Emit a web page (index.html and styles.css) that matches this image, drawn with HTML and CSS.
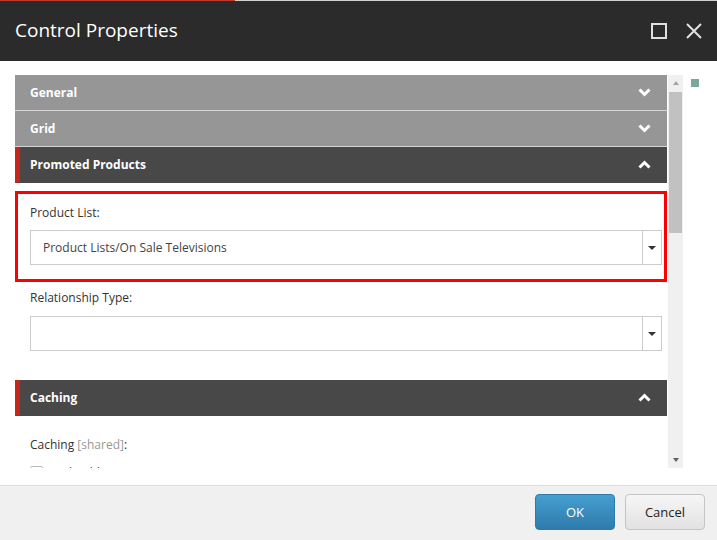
FILE: index.html
```html
<!DOCTYPE html>
<html lang="en">
<head>
    <meta charset="UTF-8">
    <title>Control Properties</title>
    <link rel="stylesheet" href="styles.css">
</head>
<body>
    <div class="dialog">
        <header class="dialog-head">
            <div class="progress"></div>
            <div class="title-row">
                <h1>Control Properties</h1>
                <div class="head-icons">
                    <span class="maximize"></span>
                    <svg class="close" width="16" height="16" viewBox="0 0 16 16">
                        <path d="M1 1 L15 15 M15 1 L1 15" stroke="#e0e0e0" stroke-width="2" fill="none"/>
                    </svg>
                </div>
            </div>
        </header>

        <div class="dialog-body">
            <div class="panel">
                <div class="acc-head">
                    <span>General</span>
                    <svg class="chev" width="13" height="9" viewBox="0 0 13 9"><path d="M1.5 1.5 L6.5 6.5 L11.5 1.5" stroke="#fff" stroke-width="3" fill="none"/></svg>
                </div>
                <div class="acc-head">
                    <span>Grid</span>
                    <svg class="chev" width="13" height="9" viewBox="0 0 13 9"><path d="M1.5 1.5 L6.5 6.5 L11.5 1.5" stroke="#fff" stroke-width="3" fill="none"/></svg>
                </div>
                <div class="acc-head open">
                    <span>Promoted Products</span>
                    <svg class="chev" width="13" height="9" viewBox="0 0 13 9"><path d="M1.5 7.5 L6.5 2.5 L11.5 7.5" stroke="#fff" stroke-width="3" fill="none"/></svg>
                </div>

                <div class="acc-body">
                    <div class="field highlight">
                        <label>Product List:</label>
                        <div class="select">
                            <span class="value">Product Lists/On Sale Televisions</span>
                            <span class="arrow"></span>
                        </div>
                    </div>
                    <div class="field">
                        <label>Relationship Type:</label>
                        <div class="select">
                            <span class="value"></span>
                            <span class="arrow"></span>
                        </div>
                    </div>
                </div>

                <div class="acc-head open">
                    <span>Caching</span>
                    <svg class="chev" width="13" height="9" viewBox="0 0 13 9"><path d="M1.5 7.5 L6.5 2.5 L11.5 7.5" stroke="#fff" stroke-width="3" fill="none"/></svg>
                </div>
                <div class="acc-body caching">
                    <label>Caching <span class="shared">[shared]</span>:</label>
                    <div class="check-row">
                        <span class="checkbox"></span>
                        <span>Cacheable</span>
                    </div>
                </div>
            </div>

            <div class="scrollbar">
                <span class="up"></span>
                <div class="thumb"></div>
                <span class="down"></span>
            </div>

            <span class="marker"></span>
        </div>

        <footer class="dialog-foot">
            <button class="btn primary">OK</button>
            <button class="btn">Cancel</button>
        </footer>
    </div>
</body>
</html>
```

FILE: styles.css
```css
body {
    margin: 0;
    font-family: "Open Sans", Arial, sans-serif;
    font-size: 12px;
    color: #333;
}

.dialog {
    width: 717px;
    height: 540px;
    display: flex;
    flex-direction: column;
    overflow: hidden;
}

/* header */
.dialog-head {
    background-color: #2b2b2b;
    height: 61px;
}

.progress {
    height: 1px;
    background: linear-gradient(to right, #c0392b 0, #c0392b 235px, #d0d0d0 235px);
}

.title-row {
    height: 60px;
    display: flex;
    align-items: center;
    justify-content: space-between;
    padding: 0 15px;
}

.title-row h1 {
    margin: 0;
    font-size: 19px;
    font-weight: normal;
    color: #fff;
    margin-top: -2px;
}

.head-icons {
    display: flex;
    align-items: center;
    gap: 19px;
}

.maximize {
    width: 12px;
    height: 12px;
    border: 2px solid #e0e0e0;
}

/* body */
.dialog-body {
    flex: 1;
    display: flex;
    align-items: flex-start;
    padding: 14px 0 0 15px;
    background: #fff;
}

.panel {
    width: 652px;
    height: 393px;
    overflow: hidden;
}

.acc-head {
    height: 35px;
    display: flex;
    align-items: center;
    justify-content: space-between;
    padding: 0 16px 0 15px;
    background-color: #969696;
    border-bottom: 1px solid #d4d4d4;
    color: #fff;
    font-weight: bold;
    font-size: 12px;
}

.acc-head.open {
    background-color: #484848;
    border-bottom-color: #484848;
    border-left: 5px solid #c9261b;
    padding-left: 10px;
}

.acc-body {
    padding: 8px 5px 29px 15px;
}

.field label,
.caching label {
    display: block;
    line-height: 18px;
    margin-bottom: 9px;
}

.field + .field {
    margin-top: 7px;
}

.field.highlight {
    border: 3px solid #ff0000;
    margin: 0 -5px 0 -15px;
    padding: 10px 2px 14px 12px;
}

.field.highlight label {
    margin-bottom: 8px;
}

.select {
    height: 33px;
    border: 1px solid #ccc;
    display: flex;
    align-items: stretch;
    background: #fff;
}

.select .value {
    flex: 1;
    padding-left: 12px;
    line-height: 33px;
    color: #444;
}

.select .arrow {
    width: 18px;
    border-left: 1px solid #ccc;
    position: relative;
}

.select .arrow::after {
    content: "";
    position: absolute;
    left: 5px;
    top: 15px;
    border-left: 4px solid transparent;
    border-right: 4px solid transparent;
    border-top: 4px solid #333;
}

.caching {
    padding-top: 20px;
}

.caching label {
    margin-bottom: 10px;
}

.shared {
    color: #999;
}

.check-row {
    display: flex;
    align-items: center;
    gap: 6px;
}

.checkbox {
    width: 11px;
    height: 11px;
    border: 1px solid #bbb;
    border-radius: 2px;
}

/* scrollbar */
.scrollbar {
    width: 15px;
    height: 393px;
    margin-left: 1px;
    background: #f0f0f0;
    display: flex;
    flex-direction: column;
    align-items: center;
}

.scrollbar .up,
.scrollbar .down {
    width: 0;
    height: 0;
    border-left: 3.5px solid transparent;
    border-right: 3.5px solid transparent;
}

.scrollbar .up {
    margin-top: 6px;
    border-bottom: 4px solid #a3a3a3;
}

.scrollbar .down {
    margin-top: auto;
    margin-bottom: 6px;
    border-top: 4px solid #606060;
}

.thumb {
    width: 13px;
    height: 141px;
    margin-top: 7px;
    background: #c1c1c1;
}

.marker {
    width: 8px;
    height: 8px;
    margin: 4px 0 0 8px;
    background: #7aa89a;
}

/* footer */
.dialog-foot {
    height: 55px;
    border-top: 1px solid #dcdcdc;
    background: #f0f0f0;
    display: flex;
    justify-content: flex-end;
    align-items: flex-start;
    gap: 10px;
    padding: 8px 12px 0 0;
    box-sizing: border-box;
}

.btn {
    width: 80px;
    height: 36px;
    font-family: "Open Sans", Arial, sans-serif;
    font-size: 13px;
    color: #222;
    border: 1px solid #c4c4c4;
    border-radius: 4px;
    background: linear-gradient(#f6f6f6, #e2e2e2);
}

.btn.primary {
    color: #fff;
    border-color: #2f79a8;
    background: linear-gradient(#459fd0, #2e7bab);
}
```
